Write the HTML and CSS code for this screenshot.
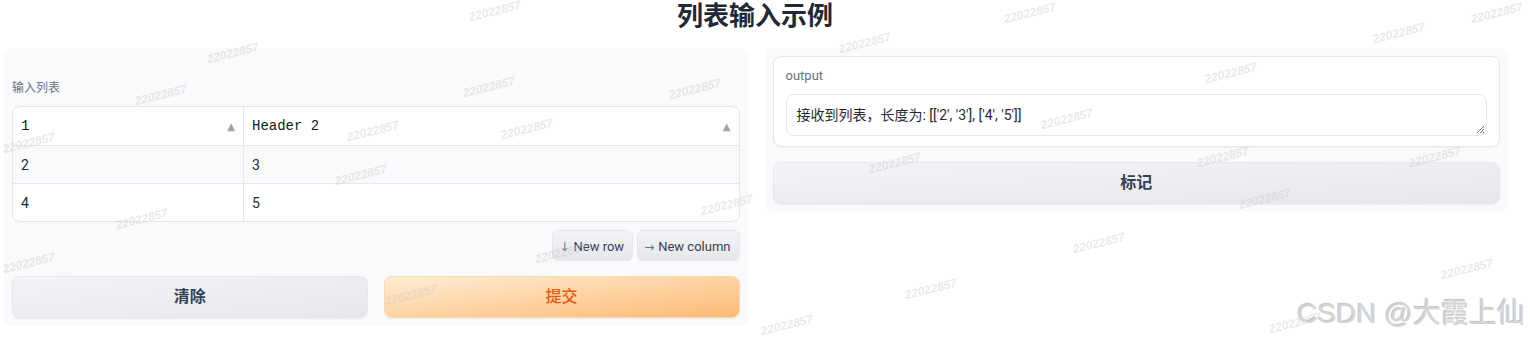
FILE: index.html
```html
<!DOCTYPE html>
<html>
<head lang="zh">
    <meta charset="UTF-8">
    <title>列表输入示例</title>
    <link rel="stylesheet" href="styles.css">
</head>
<body>
    <h1 class="title">列表输入示例</h1>

    <div class="row">
        <!-- 左边：输入列表 -->
        <div class="panel panel-left">
            <div class="label">输入列表</div>
            <div class="table">
                <div class="tr th">
                    <div class="cell col1"><span>1</span><span class="sort">&#9650;</span></div>
                    <div class="cell col2"><span>Header 2</span><span class="sort">&#9650;</span></div>
                </div>
                <div class="tr odd">
                    <div class="cell col1">2</div>
                    <div class="cell col2">3</div>
                </div>
                <div class="tr">
                    <div class="cell col1">4</div>
                    <div class="cell col2">5</div>
                </div>
            </div>
            <div class="table-tools">
                <div class="small-btn"><span class="arrow">&#8595;</span>New row</div>
                <div class="small-btn"><span class="arrow">&#8594;</span>New column</div>
            </div>
            <div class="actions">
                <div class="btn btn-gray">清除</div>
                <div class="btn btn-orange">提交</div>
            </div>
        </div>

        <!-- 右边：输出 -->
        <div class="panel panel-right">
            <div class="out-box">
                <div class="label out-label">output</div>
                <div class="textarea">接收到列表，长度为: [['2', '3'], ['4', '5']]
                    <svg class="grip" width="8" height="8" viewBox="0 0 8 8"><path d="M8 1L1 8M8 4L4 8M8 7L7 8" stroke="#777" stroke-width="1"/></svg>
                </div>
            </div>
            <div class="btn btn-gray btn-flag">标记</div>
        </div>
    </div>

    <!-- 水印 -->
    <div class="wm" style="left:468px;top:4px">22022857</div>
    <div class="wm" style="left:1003px;top:6px">22022857</div>
    <div class="wm" style="left:1470px;top:6px">22022857</div>
    <div class="wm" style="left:206px;top:46px">22022857</div>
    <div class="wm" style="left:838px;top:36px">22022857</div>
    <div class="wm" style="left:1372px;top:26px">22022857</div>
    <div class="wm" style="left:1204px;top:66px">22022857</div>
    <div class="wm" style="left:134px;top:88px">22022857</div>
    <div class="wm" style="left:462px;top:80px">22022857</div>
    <div class="wm" style="left:668px;top:82px">22022857</div>
    <div class="wm" style="left:2px;top:136px">22022857</div>
    <div class="wm" style="left:346px;top:124px">22022857</div>
    <div class="wm" style="left:500px;top:122px">22022857</div>
    <div class="wm" style="left:1040px;top:112px">22022857</div>
    <div class="wm" style="left:1408px;top:150px">22022857</div>
    <div class="wm" style="left:868px;top:156px">22022857</div>
    <div class="wm" style="left:334px;top:168px">22022857</div>
    <div class="wm" style="left:700px;top:198px">22022857</div>
    <div class="wm" style="left:1196px;top:150px">22022857</div>
    <div class="wm" style="left:1238px;top:192px">22022857</div>
    <div class="wm" style="left:115px;top:212px">22022857</div>
    <div class="wm" style="left:1072px;top:236px">22022857</div>
    <div class="wm" style="left:534px;top:246px">22022857</div>
    <div class="wm" style="left:2px;top:256px">22022857</div>
    <div class="wm" style="left:1440px;top:262px">22022857</div>
    <div class="wm" style="left:384px;top:288px">22022857</div>
    <div class="wm" style="left:904px;top:282px">22022857</div>
    <div class="wm" style="left:760px;top:318px">22022857</div>
    <div class="wm" style="left:1268px;top:316px">22022857</div>

    <div class="csdn">CSDN @大霞上仙</div>
</body>
</html>
```

FILE: styles.css
```css
body {
    margin: 0;
    background: #ffffff;
    font-family: Roboto, "Noto Sans CJK SC", sans-serif;
    color: #1f2937;
    position: relative;
    height: 341px;
    overflow: hidden;
}
.title {
    margin: 0;
    height: 40px;
    line-height: 32px;
    padding-right: 20px;
    text-align: center;
    font-size: 26px;
    font-weight: 700;
    color: #1f2937;
}
.row {
    display: flex;
    align-items: flex-start;
    gap: 17px;
    padding: 8px 22px 0 4px;
}
.panel {
    flex: 1;
    background: #f9fafb;
    border-radius: 7px;
    padding: 8px;
}
.panel-left {
    padding-top: 32px;
}
.label {
    font-size: 12px;
    color: #6b7280;
    line-height: 16px;
    margin-bottom: 10px;
}
.table {
    background: #fff;
    border: 1px solid #e5e7eb;
    border-radius: 8px;
    overflow: hidden;
}
.tr {
    display: flex;
    height: 37px;
}
.tr.th {
    height: 38px;
}
.tr.odd {
    background: #f9fafb;
}
.tr + .tr {
    border-top: 1px solid #e5e7eb;
}
.cell {
    display: flex;
    align-items: center;
    justify-content: space-between;
    padding: 0 8px;
    font-size: 14px;
    color: #1f2937;
}
.th .cell {
    font-family: "Liberation Mono", "DejaVu Sans Mono", monospace;
    font-size: 14px;
    color: #111827;
}
.col1 {
    width: 214px;
    border-right: 1px solid #e5e7eb;
}
.col2 {
    flex: 1;
}
.sort {
    font-family: "DejaVu Sans", sans-serif;
    font-size: 10px;
    color: #9ca3af;
}
.table-tools {
    display: flex;
    justify-content: flex-end;
    gap: 4px;
    margin-top: 8px;
}
.small-btn {
    height: 31px;
    line-height: 31px;
    padding: 0 8px 0 6px;
    border-radius: 6px;
    background: linear-gradient(to bottom, #f3f4f6, #e5e7eb);
    border: 1px solid #e5e7eb;
    box-sizing: border-box;
    font-size: 13px;
    color: #374151;
}
.arrow {
    margin-right: 4px;
    font-family: "DejaVu Sans", sans-serif;
    font-size: 12px;
    color: #6b7280;
}
.actions {
    display: flex;
    gap: 16px;
    margin-top: 15px;
}
.btn {
    flex: 1;
    height: 42px;
    line-height: 40px;
    box-sizing: border-box;
    text-align: center;
    border-radius: 8px;
    font-size: 16px;
    font-weight: 600;
    box-shadow: 0 1px 2px rgba(0, 0, 0, 0.06);
}
.btn-gray {
    background: linear-gradient(to bottom right, #f3f4f6, #e5e7eb);
    border: 1px solid #e5e7eb;
    color: #374151;
}
.btn-orange {
    background: linear-gradient(to bottom right, #ffedd5, #fdba74);
    border: 1px solid #fed7aa;
    color: #ea580c;
    font-weight: 500;
}
.out-box {
    background: #fff;
    border: 1px solid #e5e7eb;
    border-radius: 8px;
    padding: 11px 12px 10px 12px;
    box-shadow: 0 1px 2px rgba(0, 0, 0, 0.04);
}
.out-label {
    margin-bottom: 10px;
    font-size: 13px;
}
.textarea {
    position: relative;
    height: 42px;
    box-sizing: border-box;
    border: 1px solid #e5e7eb;
    border-radius: 8px;
    padding: 10px 10px 0 10px;
    font-size: 14px;
    color: #1f2937;
    line-height: 20px;
}
.grip {
    position: absolute;
    right: 2px;
    bottom: 2px;
}
.btn-flag {
    margin-top: 15px;
}
.wm {
    position: absolute;
    font-family: "Liberation Sans", sans-serif;
    font-style: italic;
    font-weight: 700;
    font-size: 12px;
    color: rgba(200, 200, 200, 0.4);
    transform: rotate(-14deg);
    pointer-events: none;
    white-space: nowrap;
}
.csdn {
    position: absolute;
    right: 5px;
    bottom: 10px;
    font-family: "Liberation Sans", "Noto Sans CJK SC", sans-serif;
    font-size: 28px;
    color: #d4d4d4;
    text-shadow: 1px 1px 1px #ffffff, -1px -1px 1px #c0c0c0;
}
```
